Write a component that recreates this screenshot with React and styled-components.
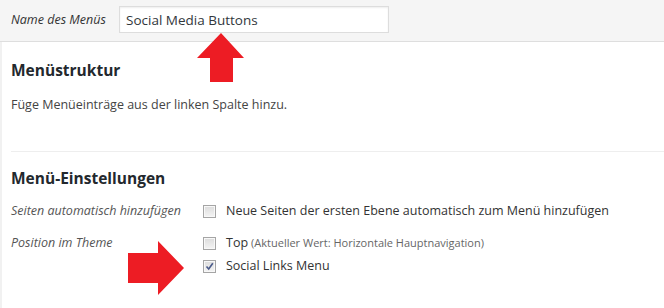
import styled, { createGlobalStyle } from 'styled-components';

const GlobalStyle = createGlobalStyle`
  html, body {
    margin: 0;
    padding: 0;
    background: #fff;
  }
  body {
    font-family: "Open Sans", "Liberation Sans", sans-serif;
    color: #444;
    font-size: 13px;
  }
`;

const Page = styled.div`
  position: relative;
  display: flex;
  flex-direction: column;
  width: 664px;
  height: 308px;
  overflow: hidden;
  box-sizing: border-box;
`;

const HeaderBar = styled.div`
  display: flex;
  align-items: center;
  box-sizing: border-box;
  height: 42px;
  flex-shrink: 0;
  padding: 0 0 2px 11px;
  background: #f5f5f5;
  border-bottom: 1px solid #dedede;
`;

const FieldLabel = styled.label`
  font-style: italic;
  font-size: 12.5px;
  color: #333;
  width: 108px;
`;

const NameInput = styled.input`
  box-sizing: border-box;
  width: 270px;
  height: 27px;
  padding: 0 6px;
  border: 1px solid #ddd;
  box-shadow: inset 0 1px 2px rgba(0, 0, 0, 0.07);
  background: #fff;
  font-family: "Open Sans", "Liberation Sans", sans-serif;
  font-size: 13.5px;
  color: #32373c;
  outline: none;
`;

const Body = styled.div`
  flex: 1;
  border-left: 2px solid #f1f1f1;
  padding-left: 9px;
`;

const Section = styled.div`
  padding-top: ${(p) => p.$top}px;
  padding-bottom: ${(p) => p.$bottom}px;
  border-bottom: ${(p) => (p.$divider ? '1px solid #eee' : 'none')};
`;

const Heading = styled.h3`
  margin: 0;
  font-size: 15.5px;
  font-weight: 700;
  color: #23282d;
  line-height: 22px;
`;

const Hint = styled.p`
  margin: 15px 0 0;
  font-size: 12.5px;
  line-height: 18px;
  color: #444;
`;

const SettingsGrid = styled.div`
  display: grid;
  grid-template-columns: 192px 1fr;
  row-gap: 12px;
  margin-top: 12px;
`;

const RowLabel = styled.div`
  font-style: italic;
  font-size: 12.5px;
  line-height: 20px;
  color: #555;
`;

const Options = styled.div`
  display: flex;
  flex-direction: column;
  gap: 3px;
`;

const Option = styled.label`
  display: flex;
  align-items: center;
  gap: 10px;
  font-size: 12.5px;
  line-height: 20px;
  color: #333;
`;

const Box = styled.span`
  box-sizing: border-box;
  display: inline-flex;
  align-items: center;
  justify-content: center;
  width: 13px;
  height: 13px;
  border: 1px solid #a5a5a5;
  background: linear-gradient(#dcdcdc, #f4f4f4);
  box-shadow: inset 0 0 0 1px #f8f8f8;
`;

const Note = styled.span`
  font-size: 11px;
  color: #666;
  margin-left: 3px;
`;

const Arrow = styled.svg`
  position: absolute;
  left: ${(p) => p.$x}px;
  top: ${(p) => p.$y}px;
`;

const CheckBox = ({ checked }) => (
  <Box>
    {checked && (
      <svg width="9" height="9" viewBox="0 0 9 9">
        <path d="M1.5 4.5 L3.7 7 L7.8 1.3" fill="none" stroke="#4a5a8a" strokeWidth="1.6" />
      </svg>
    )}
  </Box>
);

export default function App() {
  return (
    <Page>
      <GlobalStyle />
      <HeaderBar>
        <FieldLabel>Name des Menüs</FieldLabel>
        <NameInput defaultValue="Social Media Buttons" readOnly />
      </HeaderBar>
      <Body>
        <Section $top={17} $bottom={37} $divider>
          <Heading>Menüstruktur</Heading>
          <Hint>Füge Menüeinträge aus der linken Spalte hinzu.</Hint>
        </Section>
        <Section $top={15} $bottom={0}>
          <Heading>Menü-Einstellungen</Heading>
          <SettingsGrid>
            <RowLabel>Seiten automatisch hinzufügen</RowLabel>
            <Options>
              <Option>
                <CheckBox />
                Neue Seiten der ersten Ebene automatisch zum Menü hinzufügen
              </Option>
            </Options>
            <RowLabel>Position im Theme</RowLabel>
            <Options>
              <Option>
                <CheckBox />
                <span>
                  Top<Note>(Aktueller Wert: Horizontale Hauptnavigation)</Note>
                </span>
              </Option>
              <Option>
                <CheckBox checked />
                Social Links Menu
              </Option>
            </Options>
          </SettingsGrid>
        </Section>
      </Body>
      <Arrow $x={197} $y={33} width="48" height="50" viewBox="0 0 48 50">
        <polygon points="24,0 47,25 36,25 36,49 13,49 13,25 0,25" fill="#ed1c24" />
      </Arrow>
      <Arrow $x={128} $y={241} width="57" height="55" viewBox="0 0 57 55">
        <polygon points="0,12 30,12 30,0 56,27 30,54 30,42 0,42" fill="#ed1c24" />
      </Arrow>
    </Page>
  );
}
